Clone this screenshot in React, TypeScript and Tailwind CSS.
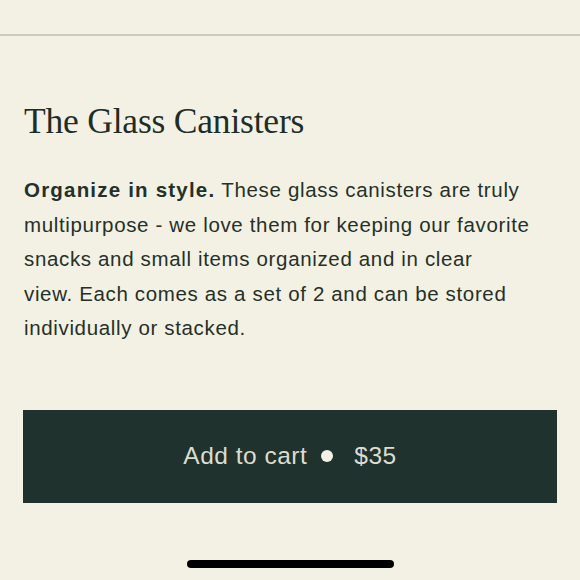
export default function App() {
  return (
    <div className="w-[580px] h-[580px] bg-[#f3f1e3] flex flex-col overflow-hidden text-[#253029]">
      <div className="h-[34px]" />
      <div className="h-[2px] bg-[#cbcabd]" />

      <div className="px-6">
        <h1 className="mt-[65px] text-[35.5px] leading-[40px] font-['Liberation_Serif',serif] text-[#1f2d27] tracking-[-0.2px]">
          The Glass Canisters
        </h1>

        <p className="mt-[32px] text-[20.5px] leading-[34.5px] font-['Liberation_Sans',Arial,sans-serif] tracking-[0.65px]">
          <span className="font-bold tracking-[1.2px]">Organize in style.</span> These glass canisters are truly
          <br />
          multipurpose - we love them for keeping our favorite
          <br />
          snacks and small items organized and in clear
          <br />
          view. Each comes as a set of 2 and can be stored
          <br />
          individually or stacked.
        </p>
      </div>

      <div className="px-[23px] mt-[64px]">
        <button className="w-full h-[93px] bg-[#1f322d] flex items-center justify-center gap-[14px] text-[24.5px] text-[#dcdccf] font-['Liberation_Sans',Arial,sans-serif] tracking-[0.5px]">
          <span>Add to cart</span>
          <span className="w-[12px] h-[12px] rounded-full bg-[#f3f1e3]" />
          <span className="ml-[7px]">$35</span>
        </button>
      </div>

      <div className="mt-auto mb-[12px] flex justify-center">
        <div className="w-[207px] h-[8px] rounded-full bg-black" />
      </div>
    </div>
  );
}
